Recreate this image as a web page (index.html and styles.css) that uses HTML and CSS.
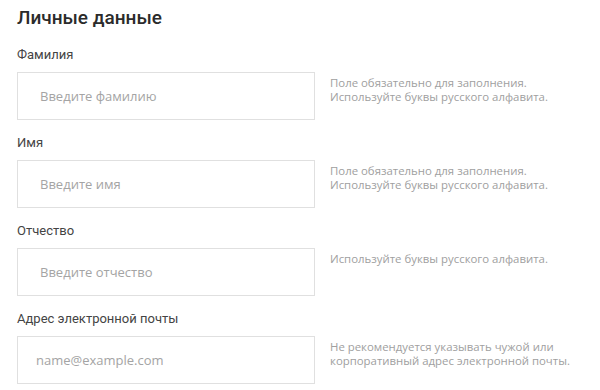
FILE: index.html
```html
<!DOCTYPE html>
<html lang="ru">
<head>
    <meta charset="UTF-8">
    <meta name="viewport" content="width=device-width, initial-scale=1.0">
    <title>Личные данные</title>
    <link rel="stylesheet" href="styles.css">
</head>
<body>
    <div class="personal-form">
        <h2>Личные данные</h2>

        <div class="form-group">
            <label for="lastName">Фамилия</label>
            <div class="field-row">
                <input type="text" id="lastName" placeholder="Введите фамилию">
                <div class="hint">Поле обязательно для заполнения.<br>Используйте буквы русского алфавита.</div>
            </div>
        </div>

        <div class="form-group">
            <label for="firstName">Имя</label>
            <div class="field-row">
                <input type="text" id="firstName" placeholder="Введите имя">
                <div class="hint">Поле обязательно для заполнения.<br>Используйте буквы русского алфавита.</div>
            </div>
        </div>

        <div class="form-group">
            <label for="middleName">Отчество</label>
            <div class="field-row">
                <input type="text" id="middleName" placeholder="Введите отчество">
                <div class="hint">Используйте буквы русского алфавита.</div>
            </div>
        </div>

        <div class="form-group">
            <label for="email">Адрес электронной почты</label>
            <div class="field-row">
                <input type="email" id="email" class="email-input" placeholder="name@example.com">
                <div class="hint">Не рекомендуется указывать чужой или<br>корпоративный адрес электронной почты.</div>
            </div>
        </div>
    </div>
</body>
</html>
```

FILE: styles.css
```css
body { margin: 0; background: #fff; font-family: "Open Sans", Arial, sans-serif; color: #333; }
.personal-form { padding: 6px 17px; }
h2 { margin: 0 0 15px; font-family: Roboto, Arial, sans-serif; font-size: 19px; line-height: 24px; font-weight: 500; color: #2b2b2b; }
.form-group { margin-bottom: 13px; }
label { display: block; font-family: Roboto, Arial, sans-serif; font-size: 13px; line-height: 20px; margin-bottom: 7px; color: #444; }
.field-row { display: flex; align-items: flex-start; }
input { width: 298px; height: 48px; padding: 0 22px; border: 1px solid #e0e0e0; border-radius: 0; box-sizing: border-box; font-family: "Open Sans", Arial, sans-serif; font-size: 13px; color: #333; background: #fff; outline: none; }
input::placeholder { color: #a4a4a4; }
.email-input { padding-left: 18px; }
.hint { margin-left: 15px; padding-top: 4px; font-size: 11.4px; line-height: 14px; color: #a0a0a0; }
```
